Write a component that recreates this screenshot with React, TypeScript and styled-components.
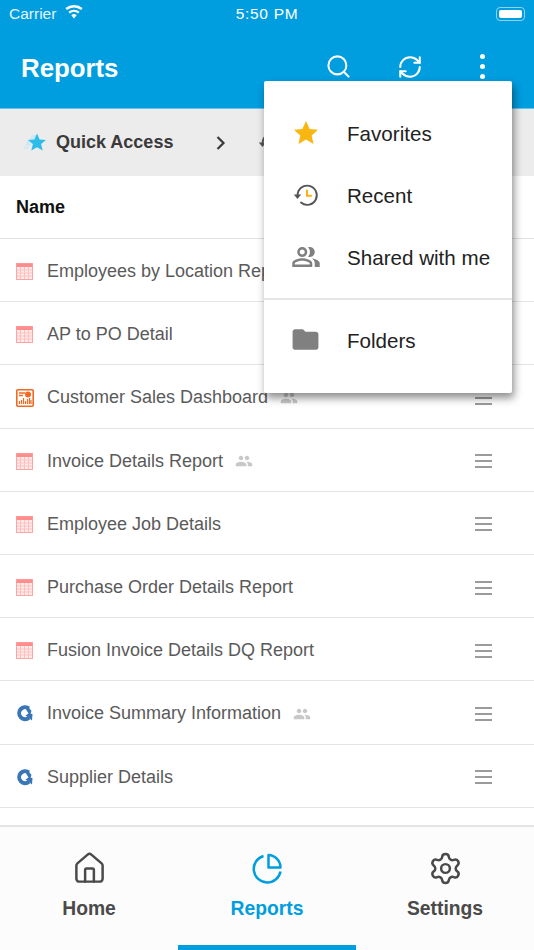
import { House, Settings, RefreshCw, Search } from 'lucide-react'
import { MdFolder, MdOutlinePeopleAlt, MdPeople } from 'react-icons/md'
import styled, { createGlobalStyle } from 'styled-components'

const BLUE = '#009ddf'

type Kind = 'table' | 'dash' | 'query'

const reports: { name: string; kind: Kind; shared?: boolean }[] = [
  { name: 'Employees by Location Report', kind: 'table' },
  { name: 'AP to PO Detail', kind: 'table' },
  { name: 'Customer Sales Dashboard', kind: 'dash', shared: true },
  { name: 'Invoice Details Report', kind: 'table', shared: true },
  { name: 'Employee Job Details', kind: 'table' },
  { name: 'Purchase Order Details Report', kind: 'table' },
  { name: 'Fusion Invoice Details DQ Report', kind: 'table' },
  { name: 'Invoice Summary Information', kind: 'query', shared: true },
  { name: 'Supplier Details', kind: 'query' },
]

const TableIcon = () => (
  <svg width="17" height="17" viewBox="0 0 17 17">
    <rect x="0.5" y="0.5" width="16" height="16" fill="#ffeaea" stroke="#ffa4a4" />
    <rect x="0.5" y="0.5" width="16" height="3.5" fill="#ff8d8d" />
    <path
      d="M1 7h15M1 10h15M1 13h15M4.5 4v12M8.5 4v12M12.5 4v12"
      stroke="#ffc0c0"
      strokeWidth="1"
    />
  </svg>
)

const DashIcon = () => (
  <svg width="18" height="18" viewBox="0 0 18 18">
    <rect x="0.8" y="0.8" width="16.4" height="16.4" rx="1" fill="#fff" stroke="#f26a21" strokeWidth="1.6" />
    <path d="M3 4h6M3 6.500h4" stroke="#f26a21" strokeWidth="1.400" />
    <circle cx="12" cy="5.600" r="3" fill="#f26a21" />
    <path
      d="M3.500 15v-3M5.500 15v-4M7.500 15v-6M9.500 15v-3M11.500 15v-5M13.500 15v-6M15 15v-4"
      stroke="#f26a21"
      strokeWidth="1.200"
    />
  </svg>
)

const QueryIcon = () => (
  <svg width="17" height="17" viewBox="0 0 17 17">
    <path d="M12.800 3.400A6 6 0 1 0 13 12.800" fill="none" stroke="#3a75b7" strokeWidth="4" />
    <path d="M10 4.500l2-3 3.500 4.500-1 2.500 2 .5-.5 6.500-3-2.500-3.500-2.500 3-2z" fill="#3a75b7" />
    <path d="M8.500 7h3.500l-2 2.200z" fill="#fff" />
  </svg>
)

const kindIcons = { table: TableIcon, dash: DashIcon, query: QueryIcon }

const HistoryIcon = () => (
  <svg width="26" height="24" viewBox="0 0 26 24" fill="none">
    <path d="M4.600 12.500A9.600 9.600 0 1 1 8 19.600" stroke="#555" strokeWidth="1.900" strokeLinecap="round" />
    <path d="M0.800 11.600h7.400l-3.700 4.400z" fill="#555" />
    <path d="M14 6.800v6h4.800" stroke="#f9b10f" strokeWidth="2" />
  </svg>
)

const App = () => {
  return (
    <Page>
      <GlobalStyle />
      <Header>
        <StatusBar>
          <Carrier>
            Carrier
            <svg width="20" height="15" viewBox="0 0 20 15" fill="#fff">
              <path d="M10 14.500l-2.700-3.300a4.300 4.300 0 0 1 5.400 0z" />
              <path d="M5.900 9.500L4.400 7.700a8.800 8.800 0 0 1 11.200 0l-1.500 1.800a6.500 6.500 0 0 0-8.200 0z" />
              <path d="M3 6L1.400 4.100A13.400 13.400 0 0 1 18.600 4.100L17 6A11 11 0 0 0 3 6z" />
            </svg>
          </Carrier>
          <Clock>5:50 PM</Clock>
          <Battery>
            <BatteryFill />
          </Battery>
        </StatusBar>
        <TitleBar>
          <Title>Reports</Title>
          <Actions>
            <ActionSlot>
              <Search size={27} strokeWidth={1.8} color="#fff" />
            </ActionSlot>
            <ActionSlot>
              <RefreshCw size={26} strokeWidth={1.9} color="#fff" />
            </ActionSlot>
            <ActionSlot>
              <Dots>
                <Dot />
                <Dot />
                <Dot />
              </Dots>
            </ActionSlot>
          </Actions>
        </TitleBar>
      </Header>

      <QuickBar>
        <svg width="22" height="20" viewBox="0 0 22 20">
          <path d="M8 2h5l-1 4H6zM4 6h5L7 10H2zM3 10h5l-2 3H1zM0 14h5l-1 2H0z" fill="#cfe9f4" />
          <path d="M13 0.500l2.600 6 6.400.5-4.900 4.100 1.600 6.400L13 14.200 7.300 17.500l1.600-6.400L4 7l6.400-.5z" fill="#2fbce9" />
        </svg>
        <QuickLabel>Quick Access</QuickLabel>
        <svg width="12" height="16" viewBox="0 0 12 16" fill="none">
          <path d="M2.500 2l6 6-6 6" stroke="#3a3a3a" strokeWidth="2.200" />
        </svg>
        <HistoryIcon />
      </QuickBar>

      <ColumnHead>Name</ColumnHead>

      <List>
        {reports.map((r) => {
          const KindIcon = kindIcons[r.kind]
          return (
            <Row key={r.name}>
              <RowIcon>
                <KindIcon />
              </RowIcon>
              <RowName>{r.name}</RowName>
              {r.shared && (
                <SharedMark>
                  <MdPeople size={18} />
                </SharedMark>
              )}
              <Burger>
                <span />
                <span />
                <span />
              </Burger>
            </Row>
          )
        })}
      </List>

      <TabBar>
        <Tab>
          <House size={35} strokeWidth={1.7} />
          <TabLabel>Home</TabLabel>
        </Tab>
        <Tab $active>
          <svg width="32" height="32" viewBox="0 0 32 32" fill="none" stroke={BLUE} strokeWidth="2.500">
            <path d="M12.500 3.500A13.500 13.500 0 1 0 29.500 19" />
            <path d="M17.500 2.500A12.500 12.500 0 0 1 29.500 15H17.500z" strokeLinejoin="round" />
          </svg>
          <TabLabel>Reports</TabLabel>
          <TabMarker />
        </Tab>
        <Tab>
          <Settings size={35} strokeWidth={1.7} />
          <TabLabel>Settings</TabLabel>
        </Tab>
      </TabBar>

      <Menu>
        <MenuRow>
          <MenuIcon>
            <svg width="26" height="25" viewBox="0 0 26 25">
              <path d="M13 1l3.600 8 8.400.8-6.300 5.700 1.800 8.500L13 19.600 5.500 24l1.800-8.500L1 9.800 9.400 9z" fill="#f9b510" />
            </svg>
          </MenuIcon>
          Favorites
        </MenuRow>
        <MenuRow>
          <MenuIcon>
            <HistoryIcon />
          </MenuIcon>
          Recent
        </MenuRow>
        <MenuRow>
          <MenuIcon>
            <MdOutlinePeopleAlt size={30} color="#808080" />
          </MenuIcon>
          Shared with me
        </MenuRow>
        <MenuDivider />
        <MenuRow>
          <MenuIcon>
            <MdFolder size={31} color="#808080" />
          </MenuIcon>
          Folders
        </MenuRow>
      </Menu>
    </Page>
  )
}

export default App

const GlobalStyle = createGlobalStyle`
  body {
    margin: 0;
    background: #fff;
    font-family: "Liberation Sans", Arial, sans-serif;
  }
`
const Page = styled.div`
  position: relative;
  display: flex;
  flex-direction: column;
  width: 534px;
  height: 950px;
  overflow: hidden;
  background: #fff;
`
const Header = styled.header`
  flex: none;
  height: 109px;
  box-sizing: border-box;
  background: ${BLUE};
  border-bottom: 1px solid #66c2ea;
  color: #fff;
`
const StatusBar = styled.div`
  display: grid;
  grid-template-columns: 1fr auto 1fr;
  align-items: center;
  height: 28px;
  padding: 0 9px 0 9px;
`
const Carrier = styled.div`
  display: flex;
  align-items: center;
  gap: 8px;
  font-size: 15.500px;
  color: #e4f4fb;
  svg {
    margin-top: -5px;
  }
`
const Clock = styled.div`
  font-size: 15.500px;
  letter-spacing: 0.700px;
`
const Battery = styled.div`
  justify-self: end;
  width: 29px;
  height: 14px;
  box-sizing: border-box;
  padding: 2px;
  border: 1px solid #8fd3f1;
  border-radius: 4px;
`
const BatteryFill = styled.div`
  height: 100%;
  background: #fff;
  border-radius: 2px;
`
const TitleBar = styled.div`
  display: flex;
  align-items: center;
  justify-content: space-between;
  height: 80px;
  padding: 0 16px 0 21px;
`
const Title = styled.h1`
  margin: 0;
  font-size: 25.800px;
  font-weight: 700;
`
const Actions = styled.div`
  display: flex;
  margin-top: -3px;
`
const ActionSlot = styled.div`
  display: flex;
  align-items: center;
  justify-content: center;
  width: 72px;
  height: 32px;
`
const Dots = styled.div`
  display: flex;
  flex-direction: column;
  gap: 5px;
`
const Dot = styled.span`
  width: 5px;
  height: 5px;
  border-radius: 50%;
  background: #fff;
`
const QuickBar = styled.div`
  flex: none;
  display: flex;
  align-items: center;
  height: 67px;
  padding-left: 24px;
  background: #ececec;
  svg:nth-of-type(2) {
    margin-left: 42px;
  }
  svg:nth-of-type(3) {
    margin-left: 31px;
  }
`
const QuickLabel = styled.span`
  margin-left: 10px;
  font-size: 18px;
  font-weight: 700;
  color: #3a3a3a;
`
const ColumnHead = styled.div`
  flex: none;
  display: flex;
  align-items: center;
  height: 62px;
  margin-right: 2px;
  padding-left: 16px;
  box-sizing: border-box;
  background: #fff;
  font-size: 18px;
  font-weight: 700;
  color: #111;
`
const List = styled.div`
  flex: 1;
  min-height: 0;
  border-top: 1px solid #e2e2e2;
`
const Row = styled.div`
  display: flex;
  align-items: center;
  height: 63.200px;
  box-sizing: border-box;
  padding: 3px 42px 0 16px;
  border-bottom: 1.500px solid #e4e4e4;
`
const RowIcon = styled.span`
  display: flex;
  width: 31px;
  flex: none;
`
const RowName = styled.span`
  font-size: 18px;
  color: #5a5a5a;
  white-space: nowrap;
`
const SharedMark = styled.span`
  display: flex;
  margin-left: 12px;
  color: #c8c8c8;
`
const Burger = styled.div`
  display: flex;
  flex-direction: column;
  gap: 4px;
  width: 17px;
  margin-left: auto;
  span {
    height: 2px;
    background: #9b9b9b;
  }
`
const TabBar = styled.nav`
  flex: none;
  display: grid;
  grid-template-columns: 178px 178px 178px;
  height: 125px;
  box-sizing: border-box;
  background: #fcfcfc;
  border-top: 2px solid #e4e4e4;
`
const Tab = styled.div<{ $active?: boolean }>`
  position: relative;
  display: flex;
  flex-direction: column;
  align-items: center;
  padding-top: 24px;
  color: ${(p) => (p.$active ? BLUE : '#4a4a4a')};
  svg {
    height: 35px;
  }
`
const TabLabel = styled.span`
  margin-top: 12px;
  font-size: 19.300px;
  font-weight: 700;
`
const TabMarker = styled.div`
  position: absolute;
  left: 0;
  right: 0;
  bottom: 0;
  height: 5px;
  background: ${BLUE};
`
const Menu = styled.div`
  position: absolute;
  left: 264px;
  top: 81px;
  width: 248px;
  height: 312px;
  box-sizing: border-box;
  padding: 22px 0 21px;
  background: #fff;
  border-radius: 2px;
  box-shadow: 2px 5px 9px rgba(0, 0, 0, 0.45);
`
const MenuRow = styled.div`
  display: flex;
  align-items: center;
  height: 62px;
  font-size: 20.600px;
  color: #222;
`
const MenuIcon = styled.span`
  display: flex;
  align-items: center;
  justify-content: center;
  width: 83px;
  margin-top: -3px;
  flex: none;
`
const MenuDivider = styled.div`
  height: 2px;
  margin: 9px 0 10px;
  background: #e6e6e6;
`
